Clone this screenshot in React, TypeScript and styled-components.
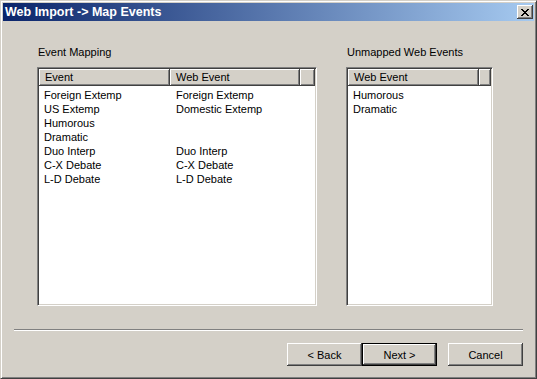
import React from 'react';
import styled, { createGlobalStyle } from 'styled-components';

const FACE = '#d4d0c8';
const SHADOW = '#808080';
const DARK = '#404040';

const GlobalStyle = createGlobalStyle`
  html, body {
    margin: 0;
    padding: 0;
    background: ${FACE};
  }
  body {
    font-family: 'Liberation Sans', Arial, sans-serif;
    font-size: 11px;
    color: #000;
  }
`;

const Window = styled.div`
  box-sizing: border-box;
  width: 537px;
  height: 379px;
  display: flex;
  flex-direction: column;
  padding: 2px;
  background: ${FACE};
  border: 1px solid;
  border-color: ${FACE} ${DARK} ${DARK} ${FACE};
  box-shadow: inset 1px 1px #fff, inset -1px -1px ${SHADOW};
`;

const TitleBar = styled.div`
  height: 18px;
  display: flex;
  align-items: center;
  padding-left: 2px;
  background: linear-gradient(to right, #0a246a, #a6caf0);
  color: #fff;
  font-weight: bold;
  font-size: 12.5px;
`;

const CloseButton = styled.div`
  box-sizing: border-box;
  width: 16px;
  height: 14px;
  margin-left: auto;
  margin-right: 1px;
  display: flex;
  align-items: center;
  justify-content: center;
  background: ${FACE};
  box-shadow: inset -1px -1px ${DARK}, inset 1px 1px #fff,
    inset -2px -2px ${SHADOW};
`;

const Body = styled.div`
  display: flex;
  flex-direction: column;
  padding: 0 11px;
`;

const MainRow = styled.div`
  display: flex;
  gap: 29px;
  padding: 25px 0 0 23px;
`;

const Group = styled.div<{ $width: number }>`
  display: flex;
  flex-direction: column;
  width: ${(p) => p.$width}px;
`;

const Label = styled.div`
  height: 13px;
  line-height: 13px;
  margin-bottom: 8px;
  padding-left: 1px;
`;

const ListBox = styled.div`
  box-sizing: border-box;
  height: 239px;
  padding: 1px;
  background: #fff;
  border: 1px solid;
  border-color: ${SHADOW} #fff #fff ${SHADOW};
  box-shadow: inset 1px 1px ${DARK}, inset -1px -1px ${FACE};
`;

const HeaderRow = styled.div<{ $cols: string }>`
  display: grid;
  grid-template-columns: ${(p) => p.$cols};
  height: 17px;
`;

const HeaderCell = styled.div`
  box-sizing: border-box;
  padding-left: 6px;
  line-height: 16px;
  background: ${FACE};
  box-shadow: inset -1px -1px ${DARK}, inset 1px 1px #fff,
    inset -2px -2px ${SHADOW};
  white-space: nowrap;
  overflow: hidden;
`;

const Rows = styled.div`
  padding-top: 2px;
`;

const Row = styled.div<{ $cols: string }>`
  display: grid;
  grid-template-columns: ${(p) => p.$cols};
  height: 14px;
  line-height: 14px;
`;

const Cell = styled.div<{ $indent: number }>`
  padding-left: ${(p) => p.$indent}px;
  white-space: nowrap;
`;

const Separator = styled.div`
  margin-top: 23px;
  border-top: 1px solid ${SHADOW};
  border-bottom: 1px solid #fff;
`;

const ButtonRow = styled.div`
  display: flex;
  justify-content: flex-end;
  margin-top: 12px;
`;

const Button = styled.button<{ $default?: boolean; $gap?: number }>`
  box-sizing: border-box;
  width: 75px;
  height: 23px;
  margin-left: ${(p) => p.$gap ?? 0}px;
  padding: 0;
  font: inherit;
  color: #000;
  background: ${FACE};
  border: ${(p) => (p.$default ? '1px solid #000' : 'none')};
  box-shadow: inset -1px -1px ${DARK}, inset 1px 1px #fff,
    inset -2px -2px ${SHADOW};
`;

const mappings: [string, string][] = [
  ['Foreign Extemp', 'Foreign Extemp'],
  ['US Extemp', 'Domestic Extemp'],
  ['Humorous', ''],
  ['Dramatic', ''],
  ['Duo Interp', 'Duo Interp'],
  ['C-X Debate', 'C-X Debate'],
  ['L-D Debate', 'L-D Debate'],
];

const unmapped = ['Humorous', 'Dramatic'];

const CloseIcon = () => (
  <svg width='8' height='7' viewBox='0 0 8 7' aria-hidden='true'>
    <path
      d='M0 0h2v1h1v1h2V1h1V0h2v1H7v1H6v1H5v1h1v1h1v1h1v1H6V6H5V5H3v1H2v1H0V6h1V5h1V4h1V3H2V2H1V1H0z'
      fill='#000'
    />
  </svg>
);

const App = () => {
  return (
    <>
      <GlobalStyle />
      <Window>
        <TitleBar>
          Web Import -&gt; Map Events
          <CloseButton>
            <CloseIcon />
          </CloseButton>
        </TitleBar>
        <Body>
          <MainRow>
            <Group $width={280}>
              <Label>Event Mapping</Label>
              <ListBox>
                <HeaderRow $cols='131px 130px 1fr'>
                  <HeaderCell>Event</HeaderCell>
                  <HeaderCell>Web Event</HeaderCell>
                  <HeaderCell />
                </HeaderRow>
                <Rows>
                  {mappings.map(([event, web]) => (
                    <Row key={event} $cols='131px 1fr'>
                      <Cell $indent={5}>{event}</Cell>
                      <Cell $indent={6}>{web}</Cell>
                    </Row>
                  ))}
                </Rows>
              </ListBox>
            </Group>
            <Group $width={147}>
              <Label>Unmapped Web Events</Label>
              <ListBox>
                <HeaderRow $cols='131px 1fr'>
                  <HeaderCell>Web Event</HeaderCell>
                  <HeaderCell />
                </HeaderRow>
                <Rows>
                  {unmapped.map((name) => (
                    <Row key={name} $cols='1fr'>
                      <Cell $indent={5}>{name}</Cell>
                    </Row>
                  ))}
                </Rows>
              </ListBox>
            </Group>
          </MainRow>
          <Separator />
          <ButtonRow>
            <Button>&lt; Back</Button>
            <Button $default>Next &gt;</Button>
            <Button $gap={11}>Cancel</Button>
          </ButtonRow>
        </Body>
      </Window>
    </>
  );
};

export default App;
